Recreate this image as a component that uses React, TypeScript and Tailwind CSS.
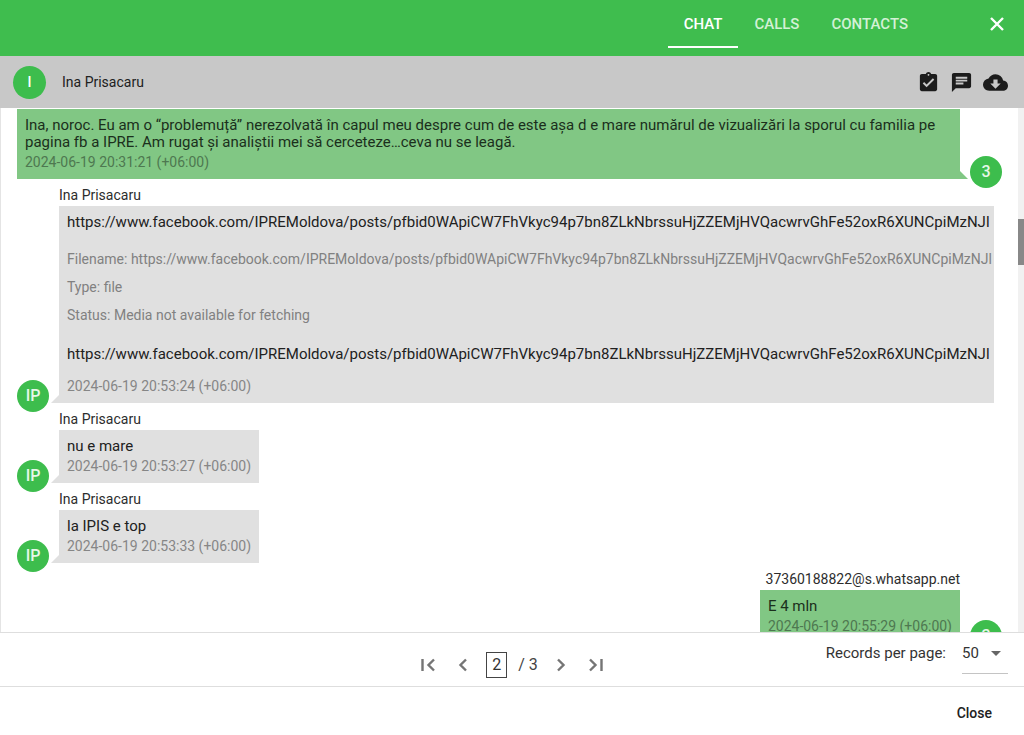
import React, { useState } from 'react';
import { MdArrowDropDown, MdAssignmentTurnedIn, MdChat, MdCloudDownload } from 'react-icons/md';

interface Message {
  id: number;
  sent: boolean;
  name?: string;
  avatar: string;
  text: string;
  time: string;
  media?: { filename: string; type: string; status: string };
}

const postUrl =
  'https://www.facebook.com/IPREMoldova/posts/pfbid0WApiCW7FhVkyc94p7bn8ZLkNbrssuHjZZEMjHVQacwrvGhFe52oxR6XUNCpiMzNJl';

const messages: Message[] = [
  {
    id: 1,
    sent: true,
    avatar: '3',
    text: 'Ina, noroc. Eu am o “problemuță” nerezolvată în capul meu despre cum de este așa d e mare numărul de vizualizări la sporul cu familia pe pagina fb a IPRE. Am rugat și analiștii mei să cerceteze…ceva nu se leagă.',
    time: '2024-06-19 20:31:21 (+06:00)',
  },
  {
    id: 2,
    sent: false,
    name: 'Ina Prisacaru',
    avatar: 'IP',
    text: postUrl,
    time: '2024-06-19 20:53:24 (+06:00)',
    media: { filename: postUrl, type: 'file', status: 'Media not available for fetching' },
  },
  { id: 3, sent: false, name: 'Ina Prisacaru', avatar: 'IP', text: 'nu e mare', time: '2024-06-19 20:53:27 (+06:00)' },
  { id: 4, sent: false, name: 'Ina Prisacaru', avatar: 'IP', text: 'la IPIS e top', time: '2024-06-19 20:53:33 (+06:00)' },
  { id: 5, sent: true, name: '37360188822@s.whatsapp.net', avatar: '3', text: 'E 4 mln', time: '2024-06-19 20:55:29 (+06:00)' },
];

const tabs = ['CHAT', 'CALLS', 'CONTACTS'];

const icons = {
  first: 'M6.5 6v12M18 6.5L12.5 12l5.5 5.5',
  prev: 'M15 6.5L9.5 12l5.5 5.5',
  next: 'M9 6.5l5.5 5.5L9 17.5',
  last: 'M17.5 6v12M6 6.5l5.5 5.5L6 17.5',
  close: 'M6 6l12 12M18 6L6 18',
};

function LineIcon({ name }: { name: keyof typeof icons }) {
  return (
    <svg className="h-6 w-6 fill-none stroke-current stroke-[2.4]" viewBox="0 0 24 24" aria-hidden="true">
      <path d={icons[name]} />
    </svg>
  );
}

function Avatar({ label }: { label: string }) {
  return (
    <div className="-mb-[9px] flex h-8 w-8 shrink-0 items-center justify-center rounded-full bg-[#3dbd4d] text-base font-medium text-[#e6f7e8]">
      {label}
    </div>
  );
}

function Tail({ sent }: { sent: boolean }) {
  return (
    <svg
      className={sent ? 'h-2 w-2 shrink-0 fill-[#81c784]' : 'h-2 w-2 shrink-0 fill-[#e0e0e0]'}
      viewBox="0 0 8 8"
      aria-hidden="true"
    >
      <path d={sent ? 'M0 0L8 8H0z' : 'M8 0V8H0z'} />
    </svg>
  );
}

function ChatMessage({ message }: { message: Message }) {
  const { sent, name, avatar, text, time, media } = message;

  return (
    <li>
      {name && (
        <div className={`h-[27px] pt-1.5 text-sm leading-5 text-[#2d2d2d] ${sent ? 'mr-[42px] text-right' : 'ml-[42px]'}`}>
          {name}
        </div>
      )}
      <div className={`flex items-end ${sent ? 'flex-row-reverse' : ''}`}>
        <Avatar label={avatar} />
        <div className="w-0.5 shrink-0" />
        <Tail sent={sent} />
        <div
          className={`min-w-[200px] px-2 pt-2 pb-[7px] ${
            sent ? 'bg-[#81c784] text-[#1b2f1c]' : 'bg-[#e0e0e0] text-[#212121]'
          } ${media ? 'mr-2 flex-1 whitespace-nowrap' : ''}`}
        >
          <div className="text-[15px] leading-[17px]">{text}</div>
          {media && (
            <>
              <div className="mt-3.5 mb-[17px] text-sm leading-7 text-[#818181]">
                <p>Filename: {media.filename}</p>
                <p>Type: {media.type}</p>
                <p>Status: {media.status}</p>
              </div>
              <div className="mb-[13px] text-[15px] leading-[17px]">{media.filename}</div>
            </>
          )}
          <div className={`mt-px text-sm leading-5 ${sent ? 'text-[#4e7850]' : 'text-[#868686]'}`}>{time}</div>
        </div>
      </div>
    </li>
  );
}

function App() {
  const [tab, setTab] = useState('CHAT');
  const [page, setPage] = useState(2);
  const [perPage, setPerPage] = useState('50');

  return (
    <div className="flex h-screen flex-col bg-white font-[Roboto,sans-serif] text-[#212121]">
      <header className="flex h-14 shrink-0 items-start justify-end bg-[#3fbd4e] text-white">
        <nav className="flex">
          {tabs.map((item) => (
            <button
              key={item}
              onClick={() => setTab(item)}
              className={`h-12 border-b-2 px-4 pt-0.5 text-[15px] font-medium ${
                tab === item ? 'border-white' : 'border-transparent text-[#d3f1d6]'
              }`}
            >
              {item}
            </button>
          ))}
        </nav>
        <button aria-label="Close dialog" className="mr-[15px] ml-[61px] flex h-12 items-center">
          <LineIcon name="close" />
        </button>
      </header>

      <div className="flex h-[52px] shrink-0 items-center bg-[#c8c8c8] pr-4 pl-[13px]">
        <div className="flex h-[33px] w-[33px] items-center justify-center rounded-full bg-[#3dbd4d] text-sm font-medium text-white">
          I
        </div>
        <h1 className="ml-4 text-sm">Ina Prisacaru</h1>
        <div className="ml-auto flex gap-2.5 text-[#1c1c1c]">
          <button aria-label="Select messages">
            <MdAssignmentTurnedIn size={23} />
          </button>
          <button aria-label="Messages">
            <MdChat size={23} />
          </button>
          <button aria-label="Download chat">
            <MdCloudDownload size={25} />
          </button>
        </div>
      </div>

      <main className="flex min-h-0 flex-1">
        <ul className="min-w-0 flex-1 overflow-hidden border-l border-[#e4e4e4] pt-px pr-4 pl-4">
          {messages.map((message) => (
            <ChatMessage key={message.id} message={message} />
          ))}
        </ul>
        <div className="w-1.5 shrink-0 bg-[#f1f1f1] pt-[111px]">
          <div className="h-[46px] bg-[#888888]" />
        </div>
      </main>

      <footer className="shrink-0">
        <div className="grid h-[55px] grid-cols-[1fr_auto_1fr] items-center border-y border-[#dedede]">
          <div className="col-start-2 flex items-center gap-[11px] pt-2.5 text-base text-[#757575]">
            <button aria-label="First page" onClick={() => setPage(1)}>
              <LineIcon name="first" />
            </button>
            <button aria-label="Previous page" onClick={() => setPage(Math.max(1, page - 1))}>
              <LineIcon name="prev" />
            </button>
            <input
              aria-label="Page"
              value={page}
              onChange={(e) => setPage(Number(e.target.value) || 1)}
              className="h-[26px] w-[21px] border border-[#444444] text-center text-[#333333]"
            />
            <span className="text-[#444444]">/ 3</span>
            <button aria-label="Next page" onClick={() => setPage(Math.min(3, page + 1))}>
              <LineIcon name="next" />
            </button>
            <button aria-label="Last page" onClick={() => setPage(3)}>
              <LineIcon name="last" />
            </button>
          </div>
          <div className="flex items-center justify-end pr-4 pb-3">
            <label htmlFor="per-page" className="mr-4 text-[15px] text-[#333333]">
              Records per page:
            </label>
            <div className="grid w-[46px] items-center border-b border-[#c4c4c4]">
              <select
                id="per-page"
                value={perPage}
                onChange={(e) => setPerPage(e.target.value)}
                className="col-start-1 row-start-1 h-10 appearance-none text-[15px] text-[#333333]"
              >
                <option>25</option>
                <option>50</option>
                <option>100</option>
              </select>
              <MdArrowDropDown size={24} className="pointer-events-none col-start-1 row-start-1 justify-self-end text-[#666666]" />
            </div>
          </div>
        </div>
        <div className="flex h-12 items-center justify-end pr-8">
          <button className="pt-1 text-sm font-medium">Close</button>
        </div>
      </footer>
    </div>
  );
}

export default App;
